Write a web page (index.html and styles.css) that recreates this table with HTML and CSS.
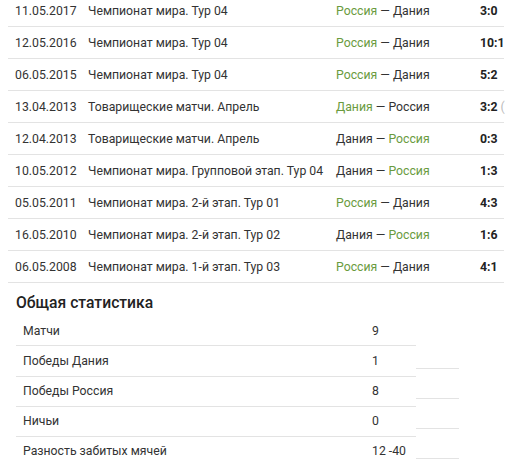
FILE: index.html
```html
<!DOCTYPE html>
<html lang="ru">
<head>
<meta charset="utf-8">
<title>Матчи</title>
<link rel="stylesheet" href="styles.css">
</head>
<body>
<div class="page">
  <div class="matches">
    <div class="row"><div class="c date">11.05.2017</div><div class="c tour">Чемпионат мира. Тур 04</div><div class="c teams"><span class="win">Россия</span> — Дания</div><div class="c score">3:0</div></div>
    <div class="row"><div class="c date">12.05.2016</div><div class="c tour">Чемпионат мира. Тур 04</div><div class="c teams"><span class="win">Россия</span> — Дания</div><div class="c score">10:1</div></div>
    <div class="row"><div class="c date">06.05.2015</div><div class="c tour">Чемпионат мира. Тур 04</div><div class="c teams"><span class="win">Россия</span> — Дания</div><div class="c score">5:2</div></div>
    <div class="row"><div class="c date">13.04.2013</div><div class="c tour">Товарищеские матчи. Апрель</div><div class="c teams"><span class="win">Дания</span> — Россия</div><div class="c score">3:2 <span class="note">(</span></div></div>
    <div class="row"><div class="c date">12.04.2013</div><div class="c tour">Товарищеские матчи. Апрель</div><div class="c teams">Дания — <span class="win">Россия</span></div><div class="c score">0:3</div></div>
    <div class="row"><div class="c date">10.05.2012</div><div class="c tour">Чемпионат мира. Групповой этап. Тур 04</div><div class="c teams">Дания — <span class="win">Россия</span></div><div class="c score">1:3</div></div>
    <div class="row"><div class="c date">05.05.2011</div><div class="c tour">Чемпионат мира. 2-й этап. Тур 01</div><div class="c teams"><span class="win">Россия</span> — Дания</div><div class="c score">4:3</div></div>
    <div class="row"><div class="c date">16.05.2010</div><div class="c tour">Чемпионат мира. 2-й этап. Тур 02</div><div class="c teams">Дания — <span class="win">Россия</span></div><div class="c score">1:6</div></div>
    <div class="row"><div class="c date">06.05.2008</div><div class="c tour">Чемпионат мира. 1-й этап. Тур 03</div><div class="c teams"><span class="win">Россия</span> — Дания</div><div class="c score">4:1</div></div>
  </div>

  <h2 class="stats-title">Общая статистика</h2>
  <div class="stats">
    <div class="srow first"><div class="s label">Матчи</div><div class="s value">9</div><div class="extra"></div></div>
    <div class="srow"><div class="s label">Победы Дания</div><div class="s value">1</div><div class="extra"><div class="eline"></div></div></div>
    <div class="srow"><div class="s label">Победы Россия</div><div class="s value">8</div><div class="extra"><div class="eline"></div></div></div>
    <div class="srow"><div class="s label">Ничьи</div><div class="s value">0</div><div class="extra"><div class="eline"></div></div></div>
    <div class="srow"><div class="s label">Разность забитых мячей</div><div class="s value">12 -40</div><div class="extra"><div class="eline"></div></div></div>
  </div>
</div>
</body>
</html>
```

FILE: styles.css
```css
html, body {
  margin: 0;
  padding: 0;
  background: #ffffff;
  overflow: hidden;
}

body {
  font-family: Roboto, "Liberation Sans", Arial, sans-serif;
  font-size: 12.25px;
  color: #333333;
}

.page {
  padding-left: 8px;
}

.matches {
  width: 496px;
  margin-top: -5px;
}

.row {
  display: grid;
  grid-template-columns: 73px 248px 144px 31px;
  height: 31px;
  border-bottom: 1px solid #e3e3e3;
  align-items: center;
  white-space: nowrap;
}

.c {
  padding-left: 7px;
}

.score {
  font-weight: bold;
  color: #222222;
}

.note {
  font-weight: normal;
  color: #bbbbbb;
}

.win {
  color: #6a9b3e;
}

.stats-title {
  margin: 0;
  padding: 11px 0 4px 8px;
  line-height: 18px;
  font-size: 15.7px;
  font-weight: 500;
  color: #222222;
}

.stats {
  margin-left: 8px;
}

.srow {
  display: flex;
  height: 30px;
}

.s {
  border-bottom: 1px solid #e3e3e3;
  display: flex;
  align-items: center;
  box-sizing: border-box;
  height: 31px;
}

.srow.first .s {
  height: 30px;
}

.label {
  width: 349px;
  padding-left: 7px;
  box-sizing: border-box;
}

.value {
  width: 51px;
  padding-left: 7px;
  box-sizing: border-box;
}

.extra {
  width: 43px;
}

.eline {
  height: 22px;
  border-bottom: 1px solid #e3e3e3;
}
```
